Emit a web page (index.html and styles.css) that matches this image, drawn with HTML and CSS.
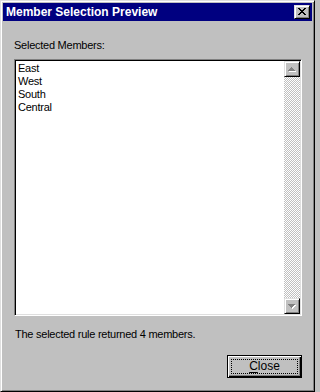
FILE: index.html
```html
<!DOCTYPE html>
<html>
<head>
<meta charset="utf-8">
<title>Member Selection Preview</title>
<link rel="stylesheet" href="styles.css">
</head>
<body>
<div class="window">
  <div class="titlebar">
    <span class="title">Member Selection Preview</span>
    <div class="xbtn">
      <svg width="8" height="7" viewBox="0 0 8 7" shape-rendering="crispEdges"><path fill="#000" d="M0 0h2v1H0zM6 0h2v1H6zM1 1h2v1H1zM5 1h2v1H5zM2 2h4v1H2zM3 3h2v1H3zM2 4h4v1H2zM1 5h2v1H1zM5 5h2v1H5zM0 6h2v1H0zM6 6h2v1H6z"/></svg>
    </div>
  </div>
  <div class="body">
    <div class="label">Selected Members:</div>
    <div class="listbox">
      <ul class="items">
        <li>East</li>
        <li>West</li>
        <li>South</li>
        <li>Central</li>
      </ul>
      <div class="scrollbar">
        <div class="sbtn">
          <svg width="14" height="14" viewBox="0 0 14 14" shape-rendering="crispEdges">
            <path fill="#fff" d="M7 6h1v1H7zM6 7h3v1H6zM5 8h5v1H5zM4 9h7v1H4z"/>
            <path fill="#808080" d="M6 5h1v1H6zM5 6h3v1H5zM4 7h5v1H4zM3 8h7v1H3z"/>
          </svg>
        </div>
        <div class="track"></div>
        <div class="sbtn">
          <svg width="14" height="14" viewBox="0 0 14 14" shape-rendering="crispEdges">
            <path fill="#fff" d="M4 6h7v1H4zM5 7h5v1H5zM6 8h3v1H6zM7 9h1v1H7z"/>
            <path fill="#808080" d="M3 5h7v1H3zM4 6h5v1H4zM5 7h3v1H5zM6 8h1v1H6z"/>
          </svg>
        </div>
      </div>
    </div>
    <div class="status">The selected rule returned 4 members.</div>
    <div class="footer">
      <button class="closebtn" type="button"><span class="focus"><u>C</u>lose</span></button>
    </div>
  </div>
</div>
</body>
</html>
```

FILE: styles.css
```css
html, body {
  margin: 0;
  padding: 0;
  background: #c0c0c0;
}

.window {
  box-sizing: border-box;
  width: 315px;
  height: 392px;
  background: #c0c0c0;
  border: 1px solid;
  border-color: #dfdfdf #000 #000 #dfdfdf;
  box-shadow: inset 1px 1px #fff, inset -1px -1px #808080;
  padding: 2px;
  display: flex;
  flex-direction: column;
  font-family: "Liberation Sans", Arial, sans-serif;
  font-size: 11px;
  color: #000;
}

.titlebar {
  height: 18px;
  background: #000080;
  display: flex;
  align-items: center;
  justify-content: space-between;
  padding: 0 2px 0 3px;
}

.title {
  color: #fff;
  font-weight: bold;
  font-size: 12px;
  line-height: 18px;
}

.xbtn {
  box-sizing: border-box;
  width: 16px;
  height: 14px;
  background: #c0c0c0;
  border: 1px solid;
  border-color: #dfdfdf #000 #000 #dfdfdf;
  box-shadow: inset 1px 1px #fff, inset -1px -1px #808080;
  display: flex;
  align-items: flex-start;
  justify-content: flex-start;
  padding: 2px 0 0 3px;
}

.xbtn svg {
  display: block;
}

.body {
  flex: 1;
  display: flex;
  flex-direction: column;
  padding: 18px 10px 0 11px;
  letter-spacing: -0.25px;
}

.label {
  line-height: 13px;
  margin-bottom: 7px;
}

.listbox {
  box-sizing: border-box;
  height: 257px;
  background: #fff;
  border: 1px solid;
  border-color: #808080 #fff #fff #808080;
  box-shadow: inset 1px 1px #000, inset -1px -1px #dfdfdf;
  padding: 1px;
  display: flex;
}

.items {
  flex: 1;
  list-style: none;
  margin: 0;
  padding: 1px 0 0 2px;
}

.items li {
  line-height: 13px;
}

.scrollbar {
  width: 16px;
  display: flex;
  flex-direction: column;
}

.sbtn {
  box-sizing: border-box;
  width: 16px;
  height: 16px;
  background: #c0c0c0;
  border: 1px solid;
  border-color: #dfdfdf #000 #000 #dfdfdf;
  box-shadow: inset 1px 1px #fff, inset -1px -1px #808080;
}

.sbtn svg {
  display: block;
}

.track {
  flex: 1;
  background: repeating-conic-gradient(#fff 0 25%, #c0c0c0 0 50%) 0 0 / 2px 2px;
}

.status {
  margin-top: 12px;
  line-height: 13px;
  padding-left: 1px;
}

.footer {
  display: flex;
  justify-content: flex-end;
  margin-top: 14px;
}

.closebtn {
  box-sizing: border-box;
  width: 75px;
  height: 23px;
  padding: 3px;
  margin: 0;
  background: #c0c0c0;
  border: 1px solid #000;
  box-shadow: inset 1px 1px #fff, inset -1px -1px #000, inset -2px -2px #808080;
  font: inherit;
  letter-spacing: 0;
  color: #000;
}

.focus {
  box-sizing: border-box;
  display: flex;
  align-items: center;
  justify-content: center;
  width: 67px;
  height: 15px;
  border: 1px dotted #000;
  font-size: 12px;
  line-height: 13px;
}

.focus u {
  text-decoration-thickness: 1px;
  text-underline-offset: 2px;
}
```
